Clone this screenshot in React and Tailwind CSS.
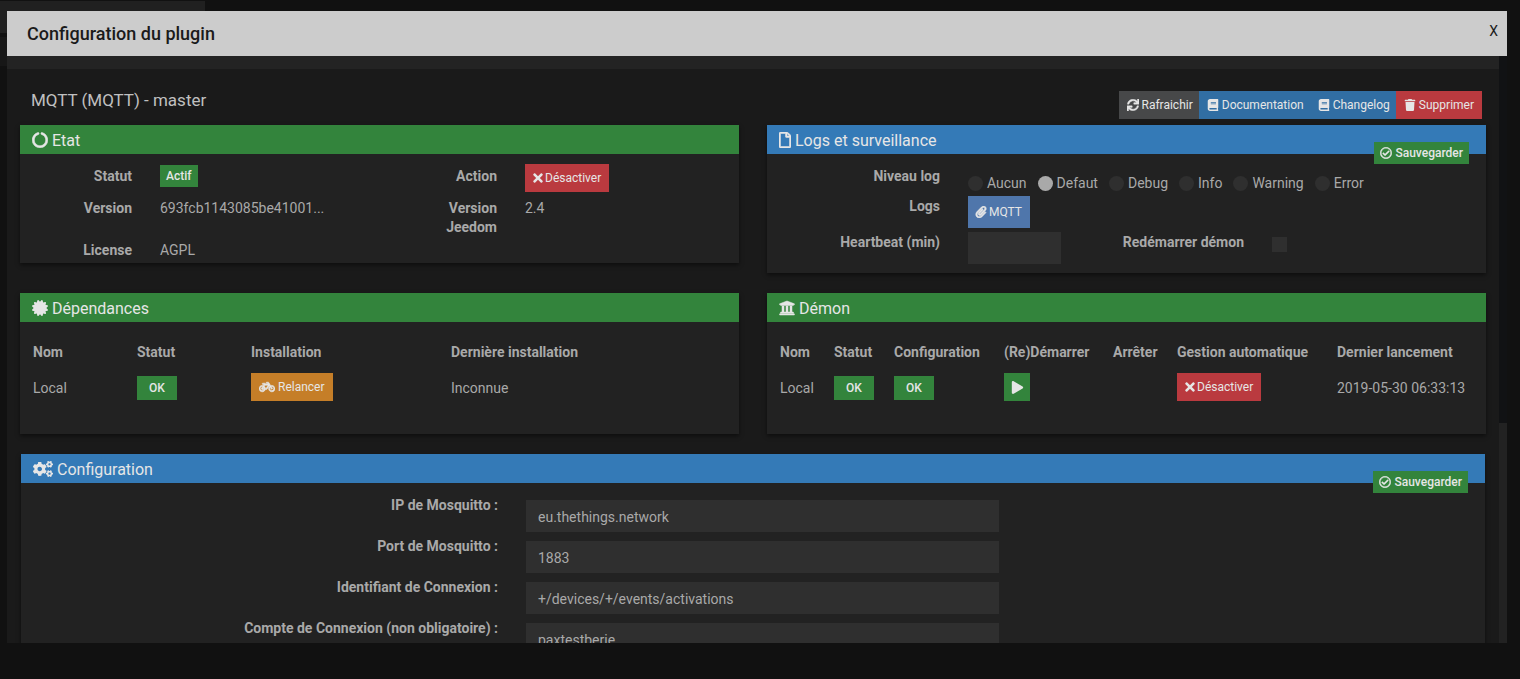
import React, { useState } from 'react'
import {
  FaSync, FaBook, FaTrash, FaTimes, FaPaperclip, FaRegCheckCircle, FaCircleNotch,
  FaCertificate, FaUniversity, FaBicycle, FaPlay, FaCogs, FaRegFile,
} from 'react-icons/fa'

const LOG_LEVELS = ['Aucun', 'Defaut', 'Debug', 'Info', 'Warning', 'Error']

const CONFIG_FIELDS = [
  { id: 'mqttAdress', label: 'IP de Mosquitto :', value: 'eu.thethings.network' },
  { id: 'mqttPort', label: 'Port de Mosquitto :', value: '1883' },
  { id: 'mqttId', label: 'Identifiant de Connexion :', value: '+/devices/+/events/activations' },
  { id: 'mqttUser', label: 'Compte de Connexion (non obligatoire) :', value: 'paxtestberie' },
]

function Panel({ title, icon, color, children, onSave, className = '' }) {
  return (
    <section className={`relative bg-[#222222] shadow-[0_2px_4px_rgba(0,0,0,0.5)] ${className}`}>
      <h3 className={`flex h-[29px] items-center gap-1 px-3 text-base text-[#e6e6e6] ${color}`}>
        {icon}
        <span className="pt-0.5">{title}</span>
      </h3>
      {onSave && (
        <button
          onClick={onSave}
          className="absolute top-[17px] right-[17px] flex h-[22px] items-center gap-[3px] bg-[#33843c] px-1.5 text-xs font-medium text-[#e6e6e6]"
        >
          <FaRegCheckCircle className="size-3 stroke-[16]" />
          Sauvegarder
        </button>
      )}
      {children}
    </section>
  )
}

function Button({ icon, color, children, className = 'h-7 gap-0.5 px-2', label }) {
  return (
    <button
      aria-label={label}
      className={`inline-flex items-center text-xs whitespace-nowrap text-[#e6e6e6] ${color} ${className}`}
    >
      {icon}
      {children}
    </button>
  )
}

function Ok() {
  return (
    <div className="flex pt-0.5">
      <span className="inline-flex h-6 w-10 items-center justify-center bg-[#33843c] text-xs font-medium text-[#e6e6e6]">OK</span>
    </div>
  )
}

function EtatRow({ cells, className }) {
  return (
    <div className={`grid grid-cols-[112fr_225fr_84fr_214fr] gap-x-7 ${className}`}>
      {cells.map((cell, i) => (
        <div key={i} className={i % 2 === 0 ? 'text-right font-bold' : ''}>{cell}</div>
      ))}
    </div>
  )
}

function App() {
  const [level, setLevel] = useState('Defaut')
  const [heartbeat, setHeartbeat] = useState('')
  const [restart, setRestart] = useState(false)
  const [config, setConfig] = useState(
    Object.fromEntries(CONFIG_FIELDS.map(f => [f.id, f.value]))
  )
  const save = () => {}

  return (
    <div className="min-h-screen bg-[#111111] font-['Roboto',sans-serif] text-sm leading-[19px] text-[#a9a9a9]">
      {/* Page under the dialog */}
      <div className="pt-px">
        <div className="h-8 w-[205px] bg-[#202020]" />
        <div className="mt-1 h-[29px] w-[205px] bg-[#171717]" />
      </div>

      <div role="dialog" aria-label="Configuration du plugin" className="fixed top-[11px] right-[13px] bottom-9 left-[7px] flex flex-col">
        <header className="flex h-[45px] shrink-0 items-center justify-between bg-[#cccccc] pr-[9px] pl-5 text-[#1a1a1a]">
          <h1 className="text-lg font-medium">Configuration du plugin</h1>
          <button className="pb-1.5 text-sm">X</button>
        </header>

        <div className="flex min-h-0 flex-1">
          <div className="min-w-0 flex-1 overflow-hidden bg-[#1a1a1a]">
            <div className="h-[13px] bg-[#232323]" />

            <div className="px-[13px] pt-[22px]">
              <div className="flex items-start justify-between pr-1 pl-[11px]">
                <h2 className="text-[17px] leading-[19px] text-[#c0c0c0]">MQTT (MQTT) - master</h2>
                <div className="flex">
                  <Button className="h-7 gap-[3px] pr-1.5 pl-2" color="bg-[#474849]" icon={<FaSync className="size-3 stroke-[16]" />}>Rafraichir</Button>
                  <Button className="h-7 gap-[3px] pr-1.5 pl-2" color="bg-[#316ea3]" icon={<FaBook className="size-3" />}>Documentation</Button>
                  <Button className="h-7 gap-[3px] pr-1.5 pl-2" color="bg-[#316ea3]" icon={<FaBook className="size-3" />}>Changelog</Button>
                  <Button className="h-7 gap-[3px] px-2" color="bg-[#ba3a3f]" icon={<FaTrash className="size-3" />}>Supprimer</Button>
                </div>
              </div>

              <div className="mt-1.5 grid grid-cols-2 items-start gap-x-7 gap-y-5">
                <Panel title="Etat" color="bg-[#33843c]" icon={<FaCircleNotch className="size-4 stroke-[20]" />}>
                  <div className="pt-2.5 pb-[3px]">
                    <EtatRow
                      className="h-7"
                      cells={[
                        <div className="pt-[3px]">Statut</div>,
                        <span className="mt-px inline-flex h-[22px] items-center bg-[#33843c] px-1.5 text-xs font-medium text-[#e6e6e6]">Actif</span>,
                        <div className="pt-[3px]">Action</div>,
                        <Button color="bg-[#ba3a3f]" icon={<FaTimes className="h-3.5 w-2.5" />}>Désactiver</Button>,
                      ]}
                    />
                    <EtatRow className="mt-[7px]" cells={['Version', '693fcb1143085be41001...', 'Version Jeedom', '2.4']} />
                    <EtatRow className="mt-1" cells={['License', 'AGPL']} />
                  </div>
                </Panel>

                <Panel title="Logs et surveillance" color="bg-[#347ab7]" icon={<FaRegFile className="h-4 w-3 stroke-[16]" />} onSave={save}>
                  <div className="pt-[13px] pb-[9px]">
                    <div className="grid grid-cols-[173fr_518fr] gap-x-7">
                      <div className="text-right font-bold">Niveau log</div>
                      <div className="flex gap-[11px] pt-[7px]">
                        {LOG_LEVELS.map(l => (
                          <label key={l} className="flex items-center gap-1">
                            <input
                              type="radio"
                              name="level"
                              checked={level === l}
                              onChange={() => setLevel(l)}
                              className="size-[15px] appearance-none rounded-full bg-[#2f2f2f] checked:bg-[#a9a9a9]"
                            />
                            {l}
                          </label>
                        ))}
                      </div>
                    </div>
                    <div className="mt-[3px] grid grid-cols-[173fr_518fr] gap-x-7">
                      <div className="pt-px text-right font-bold">Logs</div>
                      <div className="flex">
                        <Button className="h-8 gap-0.5 pr-2 pl-[7px]" color="bg-[#4f76ab]" icon={<FaPaperclip className="size-3 stroke-[24]" />}>MQTT</Button>
                      </div>
                    </div>
                    <div className="mt-1 grid grid-cols-[173fr_93fr_155fr_214fr] gap-x-7">
                      <label htmlFor="heartbeat" className="pt-px text-right font-bold">Heartbeat (min)</label>
                      <input
                        id="heartbeat"
                        value={heartbeat}
                        onChange={(e) => setHeartbeat(e.target.value)}
                        className="h-8 min-w-0 bg-[#2f2f2f] px-3 outline-none"
                      />
                      <label htmlFor="restart" className="pt-px text-right font-bold">Redémarrer démon</label>
                      <input
                        id="restart"
                        type="checkbox"
                        checked={restart}
                        onChange={(e) => setRestart(e.target.checked)}
                        className="mt-[5px] size-[15px] appearance-none bg-[#2f2f2f] checked:bg-[#a9a9a9]"
                      />
                    </div>
                  </div>
                </Panel>

                <Panel title="Dépendances" color="bg-[#33843c]" icon={<FaCertificate className="size-4" />}>
                  <div className="pt-2.5 pr-2.5 pb-[33px] pl-[3px]">
                    <table className="w-full table-fixed text-left">
                      <thead>
                        <tr>
                          <th className="w-[104px] px-2.5 py-[11px]">Nom</th>
                          <th className="w-[114px] px-2.5">Statut</th>
                          <th className="w-[200px] px-2.5">Installation</th>
                          <th className="px-2.5">Dernière installation</th>
                        </tr>
                      </thead>
                      <tbody>
                        <tr className="h-7">
                          <td className="px-2.5 pt-0.5">Local</td>
                          <td className="px-2.5"><Ok /></td>
                          <td className="px-2.5">
                            <div className="flex">
                              <Button className="h-7 gap-[3px] px-2" color="bg-[#c57e28]" icon={<FaBicycle className="size-4 stroke-[24]" />}>Relancer</Button>
                            </div>
                          </td>
                          <td className="px-2.5 pt-0.5">Inconnue</td>
                        </tr>
                      </tbody>
                    </table>
                  </div>
                </Panel>

                <Panel title="Démon" color="bg-[#33843c]" icon={<FaUniversity className="size-4 stroke-[16]" />}>
                  <div className="pt-2.5 pb-[33px] pl-[3px]">
                    <table className="w-full table-fixed text-left whitespace-nowrap">
                      <thead>
                        <tr>
                          <th className="w-[54px] px-2.5 py-[11px]">Nom</th>
                          <th className="w-[60px] px-2.5">Statut</th>
                          <th className="w-[110px] px-2.5">Configuration</th>
                          <th className="w-[109px] px-2.5">(Re)Démarrer</th>
                          <th className="w-[64px] px-2.5">Arrêter</th>
                          <th className="w-[160px] px-2.5">Gestion automatique</th>
                          <th className="px-2.5">Dernier lancement</th>
                        </tr>
                      </thead>
                      <tbody>
                        <tr className="h-7">
                          <td className="px-2.5 pt-0.5">Local</td>
                          <td className="px-2.5"><Ok /></td>
                          <td className="px-2.5"><Ok /></td>
                          <td className="px-2.5">
                            <div className="flex">
                              <Button label="Démarrer" className="h-7 w-[26px] justify-center" color="bg-[#33843c]" icon={<FaPlay className="size-[13px] shrink-0" />} />
                            </div>
                          </td>
                          <td className="px-2.5" />
                          <td className="px-2.5">
                            <div className="flex">
                              <Button color="bg-[#ba3a3f]" icon={<FaTimes className="h-3.5 w-2.5" />}>Désactiver</Button>
                            </div>
                          </td>
                          <td className="px-2.5 pt-0.5">2019-05-30 06:33:13</td>
                        </tr>
                      </tbody>
                    </table>
                  </div>
                </Panel>
              </div>

              <Panel className="mx-px mt-5" title="Configuration" color="bg-[#347ab7]" icon={<FaCogs className="size-5" />} onSave={save}>
                <form className="flex flex-col gap-[5px] pt-[13px] pb-5" onSubmit={(e) => e.preventDefault()}>
                  {CONFIG_FIELDS.map(f => (
                    <div key={f.id} className="grid grid-cols-[477fr_473fr_458fr] gap-x-7">
                      <label htmlFor={f.id} className="text-right font-bold">{f.label}</label>
                      <input
                        id={f.id}
                        type="text"
                        value={config[f.id]}
                        onChange={(e) => setConfig({ ...config, [f.id]: e.target.value })}
                        className="mt-1 h-8 min-w-0 bg-[#2f2f2f] px-3 pt-0.5 outline-none"
                      />
                    </div>
                  ))}
                </form>
              </Panel>
            </div>
          </div>

          {/* Scrollbar */}
          <div className="flex w-2 flex-col justify-end bg-[#111214]">
            <div className="h-3/8 bg-[#222222]" />
          </div>
        </div>
      </div>
    </div>
  )
}

export default App
